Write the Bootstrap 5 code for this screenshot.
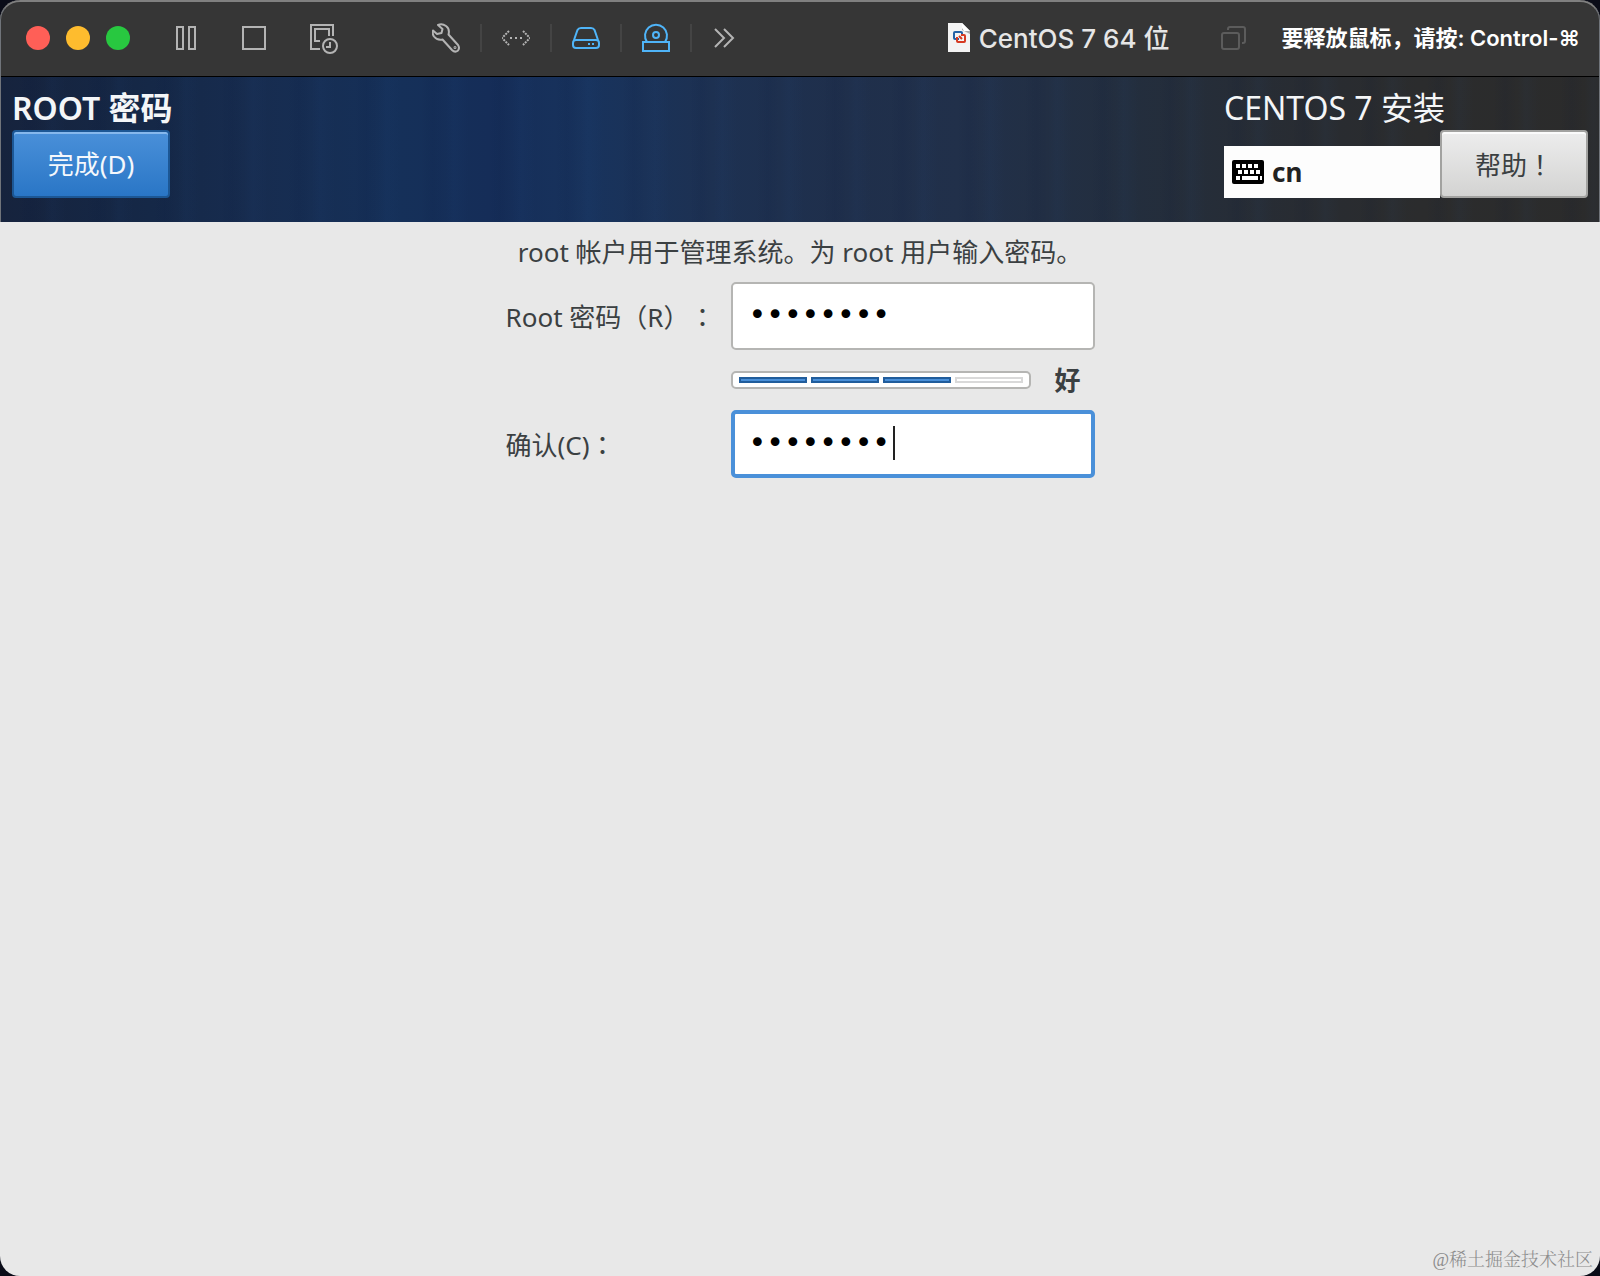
<!DOCTYPE html>
<html lang="zh-CN">
<head>
<meta charset="utf-8">
<meta name="viewport" content="width=device-width, initial-scale=1">
<title>CentOS 7 64 位</title>
<link href="https://cdn.jsdelivr.net/npm/bootstrap@5.3.0/dist/css/bootstrap.min.css" rel="stylesheet">
<style>
body{background:#0a0c18;font-family:"Noto Sans","Noto Sans CJK SC",sans-serif;font-size:26px;color:#3b4042;text-spacing-trim:space-all}
.vm-window{background:#e8e8e8;border-radius:20px;overflow:hidden}
.vm-window::after{content:"";position:absolute;inset:0;border:1px solid #70747a;border-top:2px solid #808080;border-radius:20px;pointer-events:none;-webkit-mask:linear-gradient(#000 222px,transparent 222px);mask:linear-gradient(#000 222px,transparent 222px)}
.titlebar{height:77px;background:#363636;border-bottom:1px solid #000;padding:0 20px 0 26px;color:#e6e6e6;font-family:Inter,"Noto Sans CJK SC",sans-serif}
.light{width:24px;height:24px;border:0;border-radius:50%;padding:0}
.light-close{background:#ff5f57}.light-min{background:#febc2e}.light-max{background:#28c840}
.lights{gap:16px;margin-right:40px}
.tools{gap:42px;margin-right:94px}
.devices{gap:20px}
.tool{width:28px;height:32px;padding:0;border:0;background:none;color:#b4b4b4;display:block}
.tool svg{display:block;width:28px;height:32px;fill:none;stroke:currentColor;stroke-width:2}
.tool-on{color:#4fb4f8}
.tool-dim{color:#5c5c5c}
.divider{width:2px;height:28px;background:#444}
.vm-name{gap:8px;font-size:26px;font-weight:500;margin-right:51px}
.hint{font-size:22px;font-weight:600;color:#fff;margin-left:33px}
.banner{height:145px;padding:9px 12px 0;color:#fff;
 background:
 repeating-linear-gradient(90deg,transparent 0 19px,rgba(4,18,55,.08) 31px,transparent 43px,rgba(40,90,160,.05) 52px,transparent 67px),
 linear-gradient(90deg,#16233d 0,#152847 150px,#172c4f 250px,#153059 400px,#152d58 490px,#18335d 590px,#1d3152 710px,#1f2f4b 850px,#21304a 960px,#232e3e 1130px,#282c32 1300px,#2b2c2d 1420px,#2b2b2b 100%)}
.banner-title{font-size:32px;line-height:44px;font-weight:400;margin:0;color:#f4f6f8}
.banner-title-strong{font-weight:600}
.gtk-btn{height:68px;border-radius:4px;border:2px solid #a2a2a0;background:linear-gradient(#ededed,#d3d3d2);box-shadow:inset 0 2px #fbfbfb;color:#3b4042;font-size:26px;line-height:62px;padding:0}
.gtk-done{width:158px;border-color:#1c5795;background:linear-gradient(#4a90d9,#2a76c6);box-shadow:inset 0 2px #86b8ec;color:#f5f8fc}
.gtk-help{width:148px}
.side{width:364px}
.layout-box{height:52px;background:#fdfdfd;color:#222;padding:0 8px;gap:8px;font-weight:700;line-height:36px;border:0}
.layout-box svg{width:32px;height:24px}
.wide{font-family:"Noto Sans CJK JP",sans-serif}
.intro{line-height:60px;margin:0}
.pw-form{max-width:589px}
.pw-field{width:364px}
.pw-input{height:68px;border:2px solid #b5b5b3;border-radius:5px;background:#fff;color:#000;font:30px "DejaVu Sans",sans-serif;padding:0 16px 4px}
.pw-input:focus{box-shadow:none}
.pw-active,.pw-active:focus{border:4px solid #4a90d9;padding:0 14px 4px}
.caret{position:absolute;left:162px;top:16px;width:2px;height:34px;background:#222}
.strength{height:60px}
.meter-box{width:300px;height:18px;border:2px solid #b5b5b3;border-radius:5px;background:#fff;padding:4px 6px;gap:4px}
.seg{flex:1;border:2px solid #215d9c;background:#4a90d9}
.seg-off{border-color:#d9d9d9;background:#fff}
.watermark{font:300 18px/27px "Liberation Serif","Noto Serif CJK SC","Noto Sans CJK SC",serif;color:#8c8c8c;padding:0 7px 2px}
</style>
<script src="https://cdn.jsdelivr.net/npm/bootstrap@5.3.0/dist/js/bootstrap.bundle.min.js"></script>
</head>
<body>
<div class="vm-window position-relative min-vh-100 d-flex flex-column">
 <header class="titlebar d-flex align-items-center">
  <div class="lights d-flex">
   <button class="light light-close" aria-label="关闭"></button><button class="light light-min" aria-label="最小化"></button><button class="light light-max" aria-label="全屏"></button>
  </div>
  <div class="tools d-flex">
   <button class="tool" aria-label="暂停"><svg viewBox="0 0 28 32"><path d="M7 5h6v22H7zM19 5h6v22h-6z"/></svg></button>
   <button class="tool" aria-label="停止"><svg viewBox="0 0 28 32"><path d="M3 5h22v22H3z"/></svg></button>
   <button class="tool" aria-label="快照"><svg viewBox="0 0 28 32"><path d="M10 27H1V3h22v11M10 19H5V7h14v7"/><circle cx="20" cy="24" r="7"/><path d="M20 20v5H16"/></svg></button>
  </div>
  <div class="devices d-flex align-items-center">
   <button class="tool" aria-label="设置"><svg viewBox="0 0 28 32" stroke-linejoin="round"><path d="M6 3Q10 1 14 4Q18 7 16.500 12.500L26 23Q28 26 26 28.500Q23 31 20 28L10.500 17.500Q5 18.500 2 14.500Q0 11.500 1 8.500L5 12L9.500 11L10.500 7Z"/><circle cx="23" cy="25.500" r=".5"/></svg></button>
   <span class="divider"></span>
   <button class="tool" aria-label="网络"><svg viewBox="0 0 28 32" stroke-dasharray="2 1"><path d="M7 9L0 16L7 23M21 9L28 16L21 23"/><path d="M8 16h13" stroke-dasharray="2 3"/></svg></button>
   <span class="divider"></span>
   <button class="tool tool-on" aria-label="硬盘"><svg viewBox="0 0 28 32"><path d="M2 18L5.500 8Q6.500 6 9 6H19Q21.500 6 22.500 8L26 18"/><rect x="1" y="18" width="26" height="8" rx="3"/><path d="M16 22h2M20 22h2"/></svg></button>
   <span class="divider"></span>
   <button class="tool tool-on" aria-label="光盘"><svg viewBox="0 0 28 32"><path d="M5 20A11 11 0 1 1 23 20M1 20h26v9H1z"/><circle cx="14" cy="13" r="3"/></svg></button>
   <span class="divider"></span>
   <button class="tool" aria-label="更多"><svg viewBox="0 0 28 32"><path d="M3 7l9 9-9 9M12 7l9 9-9 9"/></svg></button>
  </div>
  <div class="vm-name d-flex align-items-center ms-auto">
   <svg width="24" height="30" viewBox="0 0 24 30"><path d="M1 0h14l8 8v21H1z" fill="#f3f3f3"/><path d="M15 0l8 8v3l-8-4z" fill="#aaa"/><path d="M15 0l8 8h-6l-2-3z" fill="#fff"/><g fill="none" stroke-width="2"><path d="M12 16H8q-1 0-1-1V10q0-1 1-1h6q1 0 1 1v3" stroke="#2462a5"/><path d="M10 14v4q0 1 1 1h6q1 0 1-1v-5q0-1-1-1h-3M12 13l3 3" stroke="#d63a22"/></g></svg>
   <span>CentOS 7 64 位</span>
  </div>
  <button class="tool tool-dim" aria-label="窗口"><svg viewBox="0 0 28 32"><rect x="2" y="11" width="17" height="16" rx="2"/><path d="M8 8V7q0-2 2-2H23q2 0 2 2V19q0 2-2 2h-1"/></svg></button>
  <span class="hint">要释放鼠标，请按: Control-⌘</span>
 </header>
 <section class="banner d-flex justify-content-between">
  <div>
   <h1 class="banner-title banner-title-strong">ROOT 密码</h1>
   <button class="gtk-btn gtk-done">完成(D)</button>
  </div>
  <div class="side">
   <h2 class="banner-title">CENTOS 7 安装</h2>
   <div class="d-flex align-items-end">
    <button class="layout-box flex-grow-1 d-flex align-items-center"><svg viewBox="0 0 32 24"><rect width="32" height="24" rx="2"/><path d="M4 6h24M6 12h24M4 18h26" stroke="#fff" stroke-width="4" stroke-dasharray="4 2"/><path d="M10 18h12" stroke="#fff" stroke-width="4"/></svg><span>cn</span></button>
    <button class="gtk-btn gtk-help">帮助<span class="wide" lang="ja">！</span></button>
   </div>
  </div>
 </section>
 <main class="flex-grow-1">
  <p class="intro text-center">root 帐户用于管理系统。为 root 用户输入密码。</p>
  <form class="pw-form mx-auto">
   <div class="d-flex align-items-center justify-content-between">
    <label for="pw" class="text-nowrap">Root 密码（R）<span class="wide" lang="ja">：</span></label>
    <div class="pw-field"><input id="pw" type="password" class="form-control pw-input" value="password"></div>
   </div>
   <div class="strength d-flex align-items-center">
    <div class="pw-field ms-auto d-flex align-items-center">
     <div class="meter-box d-flex" role="meter" aria-label="密码强度" aria-valuenow="3" aria-valuemin="0" aria-valuemax="4"><span class="seg"></span><span class="seg"></span><span class="seg"></span><span class="seg seg-off"></span></div>
     <strong class="ms-4">好</strong>
    </div>
   </div>
   <div class="d-flex align-items-center justify-content-between">
    <label for="pw2" class="text-nowrap">确认(C)<span class="wide" lang="ja">：</span></label>
    <div class="pw-field position-relative"><input id="pw2" type="password" class="form-control pw-input pw-active" value="password"><span class="caret"></span></div>
   </div>
  </form>
 </main>
 <footer class="watermark text-end">@稀土掘金技术社区</footer>
</div>
</body>
</html>
